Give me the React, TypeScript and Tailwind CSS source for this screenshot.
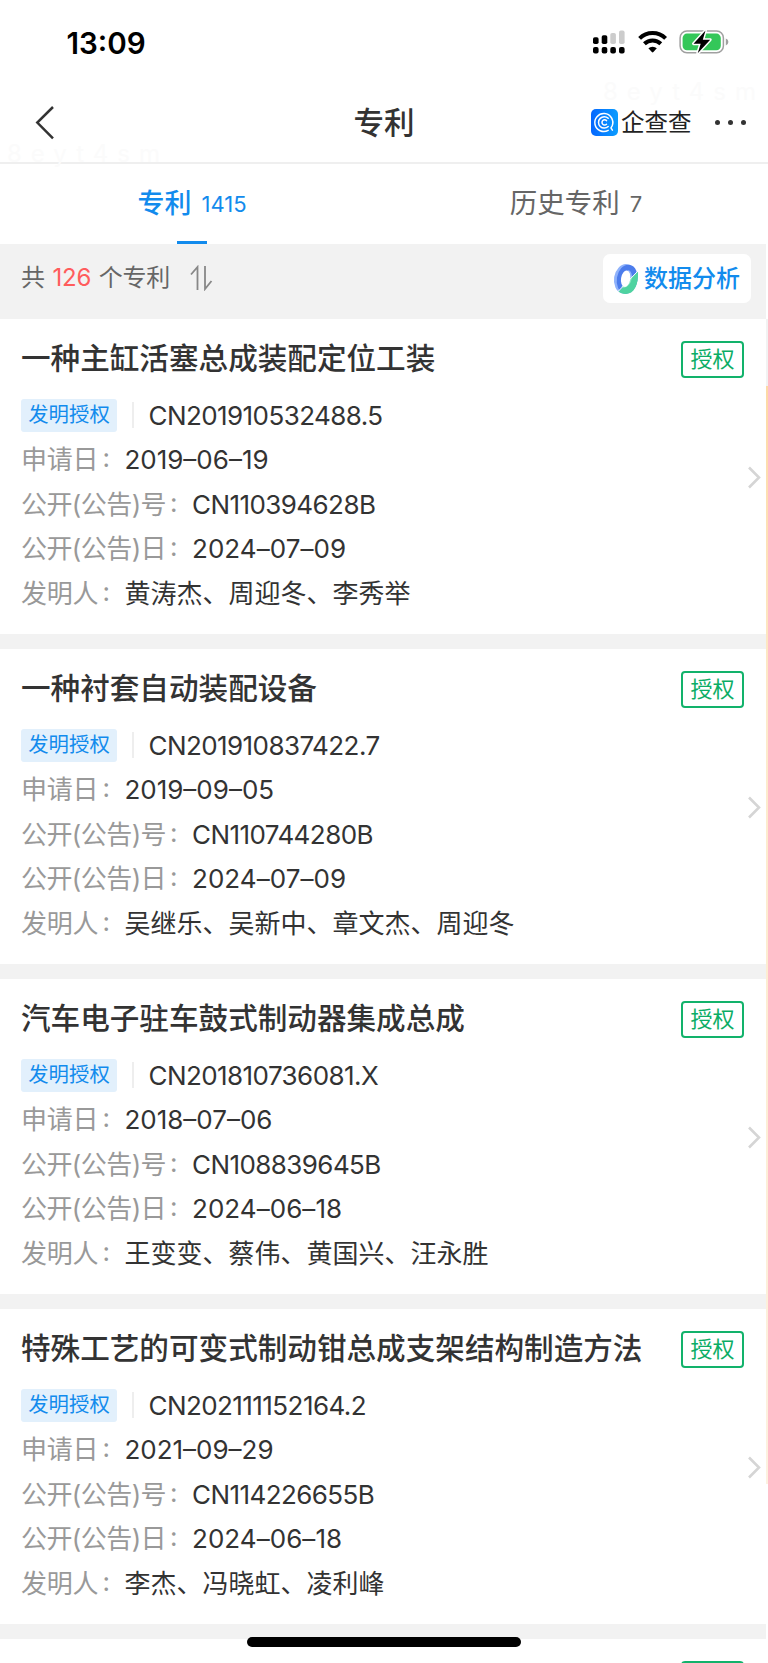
import React from 'react';

type Patent = {
  title: string;
  appNo: string;
  appDate: string;
  pubNo: string;
  pubDate: string;
  inventors: string;
};

const patents: Patent[] = [
  { title: '一种主缸活塞总成装配定位工装', appNo: 'CN201910532488.5', appDate: '2019–06–19', pubNo: 'CN110394628B', pubDate: '2024–07–09', inventors: '黄涛杰、周迎冬、李秀举' },
  { title: '一种衬套自动装配设备', appNo: 'CN201910837422.7', appDate: '2019–09–05', pubNo: 'CN110744280B', pubDate: '2024–07–09', inventors: '吴继乐、吴新中、章文杰、周迎冬' },
  { title: '汽车电子驻车鼓式制动器集成总成', appNo: 'CN201810736081.X', appDate: '2018–07–06', pubNo: 'CN108839645B', pubDate: '2024–06–18', inventors: '王变变、蔡伟、黄国兴、汪永胜' },
  { title: '特殊工艺的可变式制动钳总成支架结构制造方法', appNo: 'CN202111152164.2', appDate: '2021–09–29', pubNo: 'CN114226655B', pubDate: '2024–06–18', inventors: '李杰、冯晓虹、凌利峰' },
];

const StatusIcons = () => (
  <svg className="absolute left-[592px] top-[28px]" width="138" height="28" viewBox="592 28 138 28">
    {/* dual sim signal */}
    {[593, 601.7, 610.3, 619].map((x) => (
      <rect key={x} x={x} y="47" width="5.6" height="6.4" rx="2" fill="#000" />
    ))}
    <rect x="593" y="37.3" width="5.6" height="6.7" rx="1.8" fill="#000" />
    <rect x="601.7" y="35.3" width="5.6" height="8.7" rx="1.8" fill="#000" />
    <rect x="610.3" y="33" width="5.6" height="11" rx="1.8" fill="#ccc" />
    <rect x="619" y="30.6" width="5.6" height="13.4" rx="1.8" fill="#ccc" />
    {/* wifi */}
    <g fill="none" stroke="#000" strokeWidth="4">
      <path d="M639.6 38.400a18.500 18.500 0 0 1 26 0" />
      <path d="M644.400 43.700a11.800 11.800 0 0 1 16.400 0" />
    </g>
    <path d="M648.400 48.300a6.200 6.200 0 0 1 8.400 0l-3.400 3.800q-.8.8-1.600 0z" fill="#000" />
    {/* battery */}
    <rect x="680.1" y="31.1" width="43.3" height="21.6" rx="6.8" fill="none" stroke="#a0a0a0" strokeWidth="1.5" />
    <rect x="682.6" y="33.6" width="38.2" height="16.6" rx="4.4" fill="#34c759" />
    <path d="M725.8 38.6q2.6 1 2.6 3.4t-2.6 3.4z" fill="#a0a0a0" />
    <path d="M705.500 30.500l-12 13.200h7.200l-3 9.600 12.500-13.600h-7.400z" fill="#000" stroke="#fff" strokeWidth="3" paintOrder="stroke" strokeLinejoin="round" />
  </svg>
);

const BrandMark = () => (
  <svg width="27" height="27" viewBox="0 0 27 27">
    <defs>
      <linearGradient id="brand">
        <stop offset="0" stopColor="#0567ff" />
        <stop offset="1" stopColor="#0b9dfe" />
      </linearGradient>
    </defs>
    <rect width="27" height="27" rx="5" fill="url(#brand)" />
    <g fill="none" stroke="#fff" strokeWidth="1.5" strokeLinecap="round">
      <path d="M17.2 21.4a9 9 0 1 1 4-4.6l-1.2 2.2 1.4 2.2" />
      <path d="M17.2 9.3a5.7 5.7 0 1 0 0 8.2" />
      <path d="M15.5 11.6a2.6 2.6 0 1 0 0 3.6" />
    </g>
  </svg>
);

const RingIcon = () => (
  <svg width="26" height="32" viewBox="0 0 26 32">
    <g transform="rotate(9 13 16)" fill="none">
      <ellipse cx="12" cy="16" rx="8" ry="11.800" stroke="#8fb2fb" strokeWidth="6" />
      <ellipse cx="14.200" cy="16" rx="7.600" ry="11.800" stroke="#4c7cec" strokeWidth="5.500" />
    </g>
    <path d="M25 8.500C25.800 22 21 31 12.500 31c-3 0-5.200-1-7-2.800l5.700-5.200c4.300-.8 6.300-4.500 6.800-8z" fill="#4fd3a0" />
    <path d="M18.800 13.500c-.2 6-3 10.300-8.200 11.200l-2.200-1 2.600-2.200c4 .2 5.400-4.500 7.800-8z" fill="#8ce8c2" />
    <path d="M25.500 7.500L5 28.500" stroke="#fff" strokeWidth="1" />
    <ellipse cx="12.600" cy="15.800" rx="4.600" ry="8.200" transform="rotate(9 13 16)" fill="#fff" />
  </svg>
);

type RowProps = {
  label: string;
  value: string;
  labelClass?: string;
  valueClass?: string;
};

const Row = ({ label, value, labelClass = '', valueClass = '' }: RowProps) => (
  <div className="flex h-[44.5px] items-center text-[26px]">
    <span className={`whitespace-nowrap text-[#999] ${labelClass}`}>{label}</span>
    <span className="w-[26px] pb-[4px] pl-[4px] text-[#999]">:</span>
    <span className={`whitespace-nowrap text-[#333] ${valueClass}`}>{value}</span>
  </div>
);

const PatentCard = ({ patent }: { patent: Patent }) => (
  <article className="relative h-[330px] border-b-[15px] border-[#f2f2f2] bg-white pl-[21px]">
    <div className="flex h-[74px] items-end justify-between pr-[22px]">
      <h2 className="mb-[13px] whitespace-nowrap text-[29.6px] font-medium leading-[44px] text-[#333]">{patent.title}</h2>
      <span className="mb-[15px] flex h-[37px] w-[63px] items-center justify-center rounded-[4px] border-2 border-[#12b26b] text-[22px] text-[#0bad65]">授权</span>
    </div>
    <div className="flex h-[44.5px] items-center">
      <span className="flex h-[33px] w-24 items-center justify-center rounded-[3px] bg-[#e2f0fc] pt-px text-[20.4px] text-[#128bed]">发明授权</span>
      <span className="ml-[15px] mr-[15px] h-[26px] w-[1.5px] bg-[#eee]" />
      <span className="text-[26px] tracking-[-0.57px] text-[#333]">{patent.appNo}</span>
    </div>
    <Row label="申请日" value={patent.appDate} labelClass="tracking-[-0.2px]" />
    <Row label="公开(公告)号" value={patent.pubNo} labelClass="tracking-[-0.57px]" valueClass="tracking-[-0.57px]" />
    <Row label="公开(公告)日" value={patent.pubDate} labelClass="tracking-[-0.57px]" valueClass="tracking-[0.05px]" />
    <Row label="发明人" value={patent.inventors} labelClass="tracking-[-0.2px]" />
    <svg className="absolute left-[747px] top-[147px]" width="14" height="23" viewBox="0 0 14 23" fill="none" stroke="#d5d5d5" strokeWidth="2.6">
      <path d="M2 1.500l10 10-10 10" />
    </svg>
  </article>
);

const App: React.FC = () => {
  return (
    <div className="relative h-[1663px] w-[768px] overflow-hidden bg-white font-['Inter','Noto_Sans_CJK_SC',sans-serif]">
      <div className="h-[82px] pl-[66.5px] pt-[24px] text-[29.6px] font-semibold leading-[38px] text-black">
        13:09
        <StatusIcons />
      </div>

      <header className="relative flex h-[82px] items-center justify-center border-b-2 border-[#efefef] pt-[2px]">
        <svg className="absolute left-[35px] top-[24px]" width="20" height="34" viewBox="0 0 20 34" fill="none" stroke="#333" strokeWidth="2.5">
          <path d="M18 1L2.300 16.600 18 32.300" />
        </svg>
        <h1 className="text-[30.6px] font-medium text-[#333]">专利</h1>
        <div className="absolute right-[22px] top-[27px] flex h-[27px] items-center">
          <BrandMark />
          <span className="ml-[3px] text-[23.5px] text-[#222]">企查查</span>
          <span className="ml-[23px] flex gap-[7.5px]">
            <i className="size-[5.5px] rounded-full bg-[#333]" />
            <i className="size-[5.5px] rounded-full bg-[#333]" />
            <i className="size-[5.5px] rounded-full bg-[#333]" />
          </span>
        </div>
        <span className="absolute left-[7px] top-[57px] text-[24px] leading-[30px] tracking-[9px] text-[#fbfbfb]">8eyt4sm</span>
        <span className="absolute left-[603px] top-[-5px] text-[24px] leading-[30px] tracking-[9px] text-[#fbfbfb]">8eyt4sm</span>
      </header>

      <nav className="flex h-[80px]">
        <div className="relative flex w-[384px] items-center justify-center text-[#128bed]">
          <span className="text-[27px] font-medium">专利</span>
          <span className="ml-[10px] text-[22px]">1415</span>
          <i className="absolute bottom-0 left-[177px] h-[3px] w-[30px] bg-[#128bed]" />
        </div>
        <div className="flex w-[384px] items-center justify-center text-[#666]">
          <span className="text-[27.5px]">历史专利</span>
          <span className="ml-[10px] text-[22px]">7</span>
        </div>
      </nav>

      <div className="flex h-[75px] w-[766px] items-center justify-between bg-[#f2f2f2] pl-[21px] pr-[15px]">
        <div className="flex items-center pb-[8px] text-[24px] text-[#666]">
          <span>共</span>
          <span className="mx-[7.5px] tracking-[-0.2px] text-[#ff5c5c]">126</span>
          <span className="tracking-[-0.2px]">个专利</span>
          <svg className="ml-[20px]" width="24" height="26" viewBox="0 0 24 26" fill="none" stroke="#888" strokeWidth="1.8">
            <path d="M1 9.500L7.500 2v23M15 1v23l6.500-8" />
          </svg>
        </div>
        <button className="mb-[6px] flex h-[49px] w-[148px] items-center rounded-[7px] bg-white pl-[10px] text-[24px] font-medium text-[#128bed]">
          <RingIcon />
          <span className="ml-[5px] whitespace-nowrap">数据分析</span>
        </button>
      </div>

      <main className="w-[766px]">
        {patents.map((p) => (
          <PatentCard key={p.appNo} patent={p} />
        ))}
        <div className="flex h-[40px] justify-end pr-[22px] pt-[22px]">
          <div className="h-[37px] w-[63px] rounded-[4px] border-2 border-[#12b26b]" />
        </div>
      </main>

      {/* page edge */}
      <i className="absolute right-0 top-[319px] h-[67px] w-[2px] bg-[#f2f2f2]" />
      <i className="absolute right-0 top-[386px] h-[1098px] w-[2px] bg-linear-to-b from-[#fdd9a5] via-[#fdeacb] via-30% to-[#fdf1e0]" />

      <div className="absolute left-[247px] top-[1637px] h-[10px] w-[274px] rounded-full bg-black" />
    </div>
  );
};

export default App;
